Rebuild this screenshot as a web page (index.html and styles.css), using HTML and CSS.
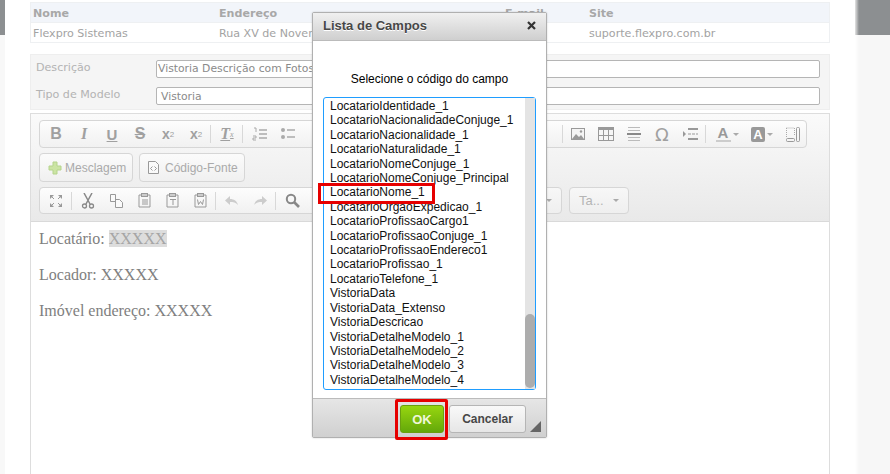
FILE: index.html
```html
<!DOCTYPE html>
<html lang="pt-BR">
<head>
<meta charset="utf-8">
<title>Lista de Campos</title>
<link rel="stylesheet" href="styles.css">
</head>
<body>
<div class="page">
  <aside class="side side-left"><div class="side-top"></div></aside>
  <main class="main">
    <div class="table">
      <div class="tr th"><span>Nome</span><span>Endereço</span><span>E-mail</span><span>Site</span></div>
      <div class="tr"><span>Flexpro Sistemas</span><span>Rua XV de Novembro</span><span></span><span>suporte.flexpro.com.br</span></div>
    </div>
    <form class="form">
      <div class="field"><label>Descrição</label><div class="input">Vistoria Descrição com Fotos</div></div>
      <div class="field"><label>Tipo de Modelo</label><div class="input select">Vistoria</div></div>
    </form>
    <section class="editor">
      <div class="toolbar">
        <div class="group g1">
          <span class="b t bold">B</span>
          <span class="b t ital">I</span>
          <span class="b t under">U</span>
          <span class="b t strike">S</span>
          <span class="b t sc">x<sub>2</sub></span>
          <span class="b t sc">x<sup>2</sup></span>
          <i class="sep sep-a"></i>
          <span class="b t ital under tx">T<sub>x</sub></span>
          <i class="sep sep-b"></i>
          <span class="b"><svg width="16" height="14" viewBox="0 0 16 14"><path d="M7 3h8M7 7h8M7 11h8" stroke="#aaa" stroke-width="1.4"/><path d="M2 1h2v4M1 9h3v2H1v2h3" fill="none" stroke="#aaa"/></svg></span>
          <span class="b"><svg width="16" height="14" viewBox="0 0 16 14"><path d="M7 3h8M7 10h8" stroke="#aaa" stroke-width="1.4"/><circle cx="3" cy="3" r="2" fill="#aaa"/><circle cx="3" cy="10" r="2" fill="#aaa"/></svg></span>
          <span class="hidden-a"></span>
          <i class="sep"></i>
          <span class="b"><svg width="15" height="14" viewBox="0 0 15 14"><rect x=".5" y="1.5" width="13" height="11" fill="#f4f4f4" stroke="#999"/><path d="M1 12l4-5 3 3 2-2 3 4z" fill="#999"/><circle cx="10" cy="4.5" r="1.2" fill="#999"/></svg></span>
          <span class="b"><svg width="16" height="14" viewBox="0 0 16 14"><rect x=".5" y=".5" width="15" height="13" fill="#f6f6f6" stroke="#999"/><rect width="16" height="3" fill="#999"/><path d="M0 8.500h16M5.500 3v11M10.500 3v11" stroke="#999"/></svg></span>
          <span class="b"><svg width="14" height="14" viewBox="0 0 14 14"><path d="M1 .5h12M1 3.500h12M1 10.500h12M1 13.500h12" stroke="#bbb"/><path d="M0 7h14" stroke="#888" stroke-width="2"/></svg></span>
          <span class="b t omega">Ω</span>
          <span class="b"><svg width="15" height="12" viewBox="0 0 15 12"><path d="M0 3l3 3-3 3z" fill="#999"/><path d="M5 1h10M5 11h10" stroke="#999" stroke-width="2"/><path d="M5 6h10" stroke="#999" stroke-dasharray="3 1"/></svg></span>
          <i class="sep sep-c"></i>
          <span class="b wide"><span class="acolor">A</span><i class="caret"></i></span>
          <span class="b wide2"><span class="abg">A</span><i class="caret"></i></span>
          <span class="b last"><svg width="14" height="15" viewBox="0 0 14 15"><path d="M.5 1h8M.5 1v9M8.500 1v8" stroke="#aaa" stroke-dasharray="1 1" fill="none"/><rect x="10.500" y=".5" width="3" height="14" rx="1" fill="none" stroke="#999"/><rect x=".5" y="11.500" width="8" height="3" rx="1" fill="none" stroke="#999"/></svg></span>
        </div>
        <div class="row2">
          <span class="btn"><svg width="14" height="14" viewBox="0 0 14 14"><path d="M5 1h4v4h4v4H9v4H5V9H1V5h4z" fill="#cbe4a4" stroke="#b5d48c"/></svg>Mesclagem</span>
          <span class="btn src"><svg width="11" height="13" viewBox="0 0 11 13"><path d="M.5.500h7l3 3v9h-10z" fill="#fafafa" stroke="#999"/><path d="M4.500 5.500l-2 2 2 2M6.500 5.500l2 2-2 2" fill="none" stroke="#999"/></svg>Código-Fonte</span>
        </div>
        <div class="row3">
          <div class="group g3">
            <span class="b"><svg width="14" height="14" viewBox="0 0 14 14"><path d="M1 1h4L1 5zM13 1H9l4 4zM1 13h4l-4-4zM13 13H9l4-4z" fill="#999"/><path d="M2 2l3 3M12 2L9 5M2 12l3-3M12 12L9 9" stroke="#999"/></svg></span>
            <i class="sep"></i>
            <span class="b"><svg width="14" height="16" viewBox="0 0 14 16"><path d="M3 0l6 11M11 0L5 11" stroke="#888" stroke-width="1.500"/><circle cx="3.500" cy="13" r="2" fill="none" stroke="#888" stroke-width="1.300"/><circle cx="10.500" cy="13" r="2" fill="none" stroke="#888" stroke-width="1.300"/></svg></span>
            <span class="b"><svg width="13" height="14" viewBox="0 0 13 14"><path d="M.5.500h5v7h-5zM5.500 5.500h4l3 3v5h-7z" fill="#fafafa" stroke="#999"/></svg></span>
            <span class="b"><svg width="13" height="15" viewBox="0 0 13 15"><path d="M3 2H1v12h11V2h-2" fill="none" stroke="#999"/><rect x="3.500" y=".5" width="6" height="3" fill="#ccc" stroke="#999"/><path d="M4 7h6M4 9h6M4 11h6" stroke="#999"/></svg></span>
            <span class="b"><svg width="13" height="15" viewBox="0 0 13 15"><path d="M3 2H1v12h11V2h-2" fill="none" stroke="#999"/><rect x="3.500" y=".5" width="6" height="3" fill="#ccc" stroke="#999"/><path d="M4 6.500h6M7 6.500V12" stroke="#999"/></svg></span>
            <span class="b"><svg width="13" height="15" viewBox="0 0 13 15"><path d="M3 2H1v12h11V2h-2" fill="none" stroke="#999"/><rect x="3.500" y=".5" width="6" height="3" fill="#ccc" stroke="#999"/><path d="M3.500 6.500l1 5 2-3 2 3 1-5" fill="none" stroke="#999"/></svg></span>
            <i class="sep"></i>
            <span class="b"><svg width="14" height="10" viewBox="0 0 14 10"><path d="M5 0L0 4.500 5 9V6c3 0 6 .5 8 3-1-4-4-6-8-6z" fill="#ccc"/></svg></span>
            <span class="b"><svg width="14" height="10" viewBox="0 0 14 10"><path d="M9 0l5 4.500L9 9V6C6 6 3 6.500 1 9c1-4 4-6 8-6z" fill="#ccc"/></svg></span>
            <i class="sep"></i>
            <span class="b"><svg width="15" height="15" viewBox="0 0 15 15"><circle cx="6" cy="6" r="4.200" fill="none" stroke="#888" stroke-width="2"/><path d="M9 9l5 5" stroke="#888" stroke-width="2.600"/></svg></span>
          </div>
          <div class="combo c1"><i class="caret"></i></div>
          <div class="combo c2"><span>Ta...</span><i class="caret"></i></div>
        </div>
      </div>
      <div class="content">
        <p>Locatário: <mark>XXXXX</mark></p>
        <p>Locador: XXXXX</p>
        <p>Imóvel endereço: XXXXX</p>
      </div>
    </section>
  </main>
  <aside class="side side-right"><div class="side-top"></div></aside>
</div>

<div class="dialog">
  <header class="dlg-head"><h2>Lista de Campos</h2><svg class="close" width="9" height="9" viewBox="0 0 9 9"><path d="M1 1l7 7M8 1L1 8" stroke="#333" stroke-width="2.200"/></svg></header>
  <div class="dlg-body">
    <p class="hint">Selecione o código do campo</p>
    <div class="list">
      <ul>
        <li>LocatarioIdentidade_1</li>
        <li>LocatarioNacionalidadeConjuge_1</li>
        <li>LocatarioNacionalidade_1</li>
        <li>LocatarioNaturalidade_1</li>
        <li>LocatarioNomeConjuge_1</li>
        <li>LocatarioNomeConjuge_Principal</li>
        <li>LocatarioNome_1</li>
        <li>LocatarioOrgaoExpedicao_1</li>
        <li>LocatarioProfissaoCargo1</li>
        <li>LocatarioProfissaoConjuge_1</li>
        <li>LocatarioProfissaoEndereco1</li>
        <li>LocatarioProfissao_1</li>
        <li>LocatarioTelefone_1</li>
        <li>VistoriaData</li>
        <li>VistoriaData_Extenso</li>
        <li>VistoriaDescricao</li>
        <li>VistoriaDetalheModelo_1</li>
        <li>VistoriaDetalheModelo_2</li>
        <li>VistoriaDetalheModelo_3</li>
        <li>VistoriaDetalheModelo_4</li>
      </ul>
      <div class="track"><div class="thumb"></div></div>
      <div class="mark-name"></div>
    </div>
  </div>
  <footer class="dlg-foot">
    <span class="dbtn ok">OK</span>
    <span class="dbtn cancel">Cancelar</span>
    <i class="grip"></i>
    <div class="mark-ok"></div>
  </footer>
</div>
</body>
</html>
```
FILE: styles.css
```css
* { box-sizing: border-box; }
html, body { margin: 0; height: 100%; overflow: hidden; background: #fff; }
body { position: relative; }
.page { display: flex; height: 474px; overflow: hidden; }

.side { flex: none; background: #f8f8f8; }
.side-left { width: 5px; }
.side-right { width: 35px; background: linear-gradient(90deg, #fff, #f7f7f7 4px); }
.side-top { height: 35px; background: #8c8f91; }
.side-right .side-top { background: linear-gradient(90deg, #e4e4e4, #8c8f91 4px); }

.main { flex: 1; padding: 2px 25px 0; font: 11.100px "DejaVu Sans", sans-serif; color: #a3a3a3; }

.table { border: 1px solid #eef0f2; }
.tr { display: grid; grid-template-columns: 186px 286px 84px 1fr; height: 19px; line-height: 21px; padding-left: 2px; }
.th { height: 20px; background: #f2f5fa; font-weight: bold; color: #a8a8a8; border-bottom: 1px solid #eef0f2; }

.form { margin-top: 11px; height: 56px; background: #f5f5f5; border: 1px solid #eee; padding: 5px 0 0 5px; }
.field { display: flex; height: 17px; margin-bottom: 10px; }
.field label { width: 120px; line-height: 15px; color: #b3b3b3; }
.input { width: 664px; height: 18px; background: #fff; border: 1px solid #b5b5b5; border-radius: 2px; padding-left: 1px; font-size: 10.800px; line-height: 16px; color: #8a8a8a; white-space: nowrap; overflow: hidden; }
.select { padding-left: 4px; line-height: 18px; }

.editor { margin-top: 3px; height: 361px; border: 1px solid #ddd; border-bottom: 0; }
.toolbar { height: 108px; padding: 6px 8px 0; background: linear-gradient(#fafafa, #e9e9e9); border-bottom: 1px solid #d9d9d9; }
.group { display: flex; align-items: center; height: 28px; padding-left: 2px; border: 1px solid #d6d6d6; border-radius: 4px; background: linear-gradient(#fdfdfd, #f1f1f1); }
.g1 { width: 768px; }
.b { flex: none; width: 28px; height: 26px; display: flex; align-items: center; justify-content: center; color: #a0a0a0; font-family: "Liberation Sans", sans-serif; }
.b svg { flex: none; }
.sep { flex: none; width: 1px; height: 18px; margin: 0 1px 0 0; background: #d8d8d8; }
.sep-a { margin-right: 2px; }
.sep-b { margin: 0 3px 0 1px; }
.sep-c { margin-left: 1px; }
.t { font-size: 15px; }
.bold { font-weight: bold; font-size: 16px; }
.ital { font-style: italic; font-family: "Liberation Serif", serif; font-size: 16px; font-weight: bold; }
.under { text-decoration: underline; font-weight: bold; }
.strike { text-decoration: line-through; font-size: 16px; font-weight: bold; }
.sc { font-weight: bold; font-size: 14px; }
.sc sub, .sc sup, .tx sub { font-size: 8px; font-weight: normal; }
.omega { font-size: 18px; font-family: "DejaVu Sans", sans-serif; }
.hidden-a { flex: none; width: 260px; }
.wide { width: 40px; gap: 2px; }
.wide2 { width: 30px; gap: 2px; }
.last { margin-left: 2px; }
.acolor { width: 15px; text-align: center; font: bold 15px "Liberation Sans", sans-serif; color: #999; border-bottom: 2px solid #ccc; line-height: 14px; }
.abg { font: bold 13px "Liberation Sans", sans-serif; color: #fff; background: #999; width: 14px; height: 15px; border-radius: 2px; text-align: center; line-height: 15px; }
.caret { display: block; flex: none; width: 0; height: 0; border: 3px solid transparent; border-top-color: #aaa; border-bottom: 0; }

.row2 { display: flex; gap: 6px; margin-top: 5px; height: 29px; }
.btn { display: flex; align-items: center; gap: 3px; padding: 0 0 0 8px; width: 94px; border: 1px solid #d6d6d6; border-radius: 4px; background: linear-gradient(#fbfbfb, #f0f0f0); font: 12px "Liberation Sans", sans-serif; color: #aaa; white-space: nowrap; }
.btn svg { flex: none; }
.src { width: 106px; gap: 6px; }

.row3 { display: flex; margin-top: 5px; height: 27px; }
.row3 .group { height: 27px; }
.g3 { flex: none; width: 278px; }
.g3 .sep { margin: 0 2px 0 1px; }
.combo { flex: none; display: flex; align-items: center; justify-content: flex-end; padding-right: 9px; height: 27px; border: 1px solid #d6d6d6; border-radius: 4px; background: linear-gradient(#f7f7f7, #efefef); font: 13px "Liberation Sans", sans-serif; color: #b5b5b5; }
.c1 { margin-left: 60px; width: 185px; }
.c2 { margin-left: 7px; width: 60px; justify-content: space-between; padding-left: 9px; }

.content { padding: 8px 8px 0; font: 16px/18px "Liberation Serif", serif; color: #808080; }
.content p { margin: 0 0 18px; }
.content mark { background: #ddd; color: #a5a5a5; }

.dialog { position: absolute; left: 312px; top: 12px; width: 235px; height: 426px; display: flex; flex-direction: column; border: 1px solid #b0b0b0; border-radius: 2px; background: #fff; box-shadow: 0 0 2px rgba(0,0,0,.2); font-family: "Liberation Sans", sans-serif; }
.dlg-head { flex: none; height: 28px; display: flex; align-items: center; justify-content: space-between; padding: 0 10px 2px; background: linear-gradient(#f0f0f0, #cfcfcf); border-bottom: 1px solid #bbb; }
.dlg-head h2 { margin: 0; font-size: 13px; font-weight: bold; color: #474747; text-shadow: 0 1px 0 #fff; }
.close { flex: none; }
.dlg-body { flex: 1; padding: 31px 10px 0; }
.hint { margin: 0 0 10px; height: 15px; line-height: 15px; text-align: center; font-size: 12px; color: #000; }
.list { position: relative; display: flex; height: 293px; border: 1px solid #1f9dff; border-radius: 3px; }
.list ul { flex: 1; margin: 0; padding: 1px 0 0 6px; list-style: none; font-size: 12px; line-height: 14.400px; color: #111; }
.track { flex: none; width: 10px; background: #e4e4e4; position: relative; }
.thumb { position: absolute; left: 0; right: 0; bottom: 1px; height: 74px; border-radius: 5px; background: #adadad; }
.mark-name { position: absolute; left: -6px; top: 85px; width: 117px; height: 21px; border: 3px solid #e60000; }

.dlg-foot { flex: none; position: relative; height: 39px; display: flex; align-items: flex-start; justify-content: flex-end; gap: 5px; padding: 6px 20px 0 0; background: linear-gradient(#e6e6e6, #d0d0d0); border-top: 1px solid #bbb; }
.dbtn { height: 28px; display: flex; align-items: center; justify-content: center; border-radius: 3px; font-size: 12px; font-weight: bold; }
.ok { width: 44px; background: linear-gradient(#97d60f, #64a80a); border: 1px solid #6a9f10; color: #f0f7d8; font-size: 13px; }
.cancel { width: 77px; background: linear-gradient(#f9f9f9, #e6e6e6); border: 1px solid #b5b5b5; color: #474747; }
.grip { position: absolute; right: 5px; bottom: 5px; width: 0; height: 0; border-style: solid; border-width: 0 0 11px 11px; border-color: transparent transparent #666; }
.mark-ok { position: absolute; left: 82px; top: 0; width: 53px; height: 41px; border: 3px solid #e60000; border-radius: 2px; }
```
